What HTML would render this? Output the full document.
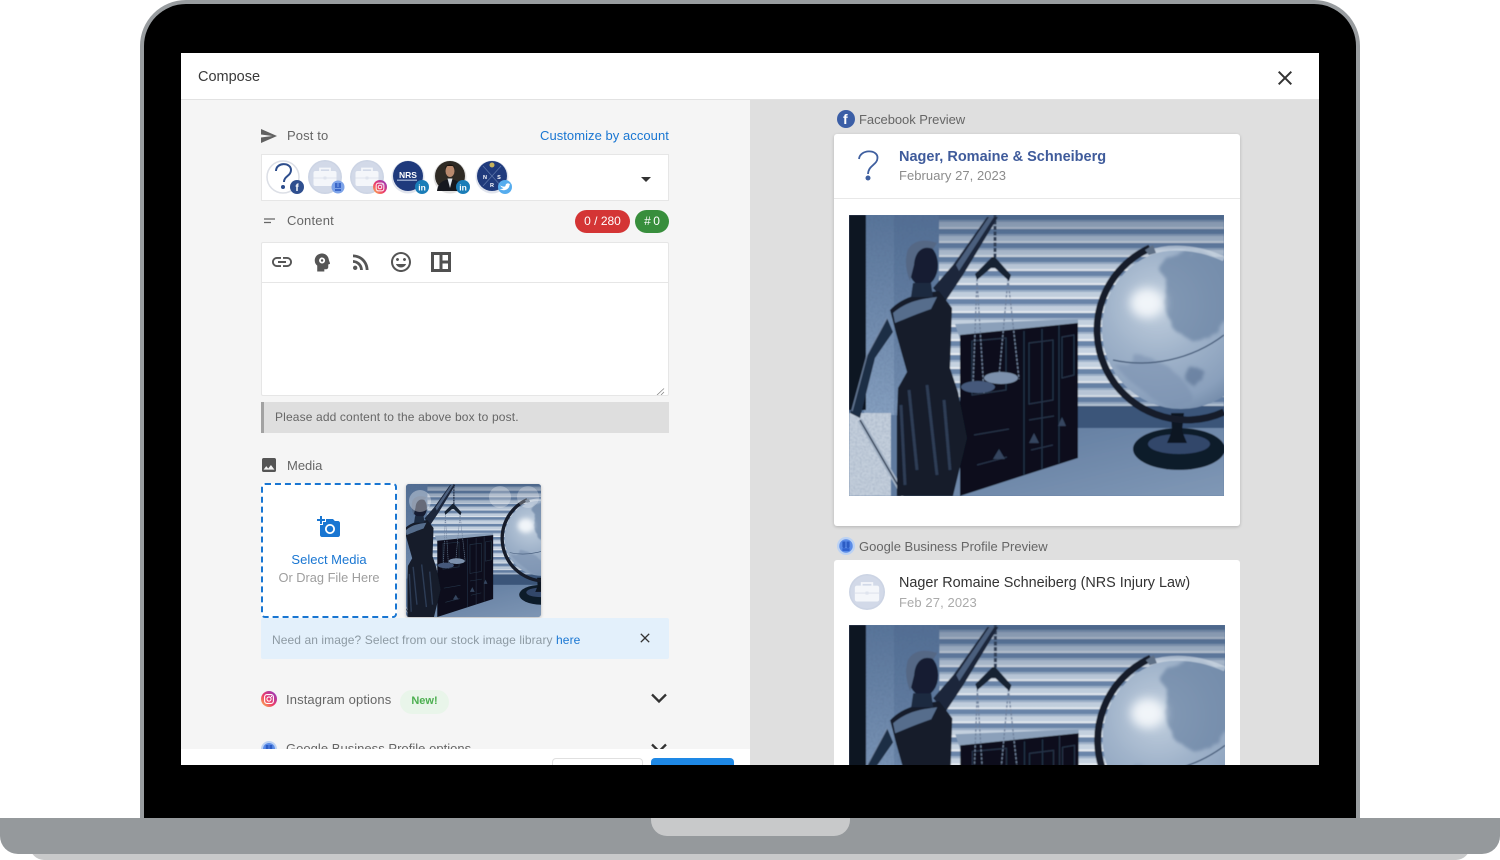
<!DOCTYPE html>
<html lang="en">
<head>
<meta charset="utf-8">
<title>Compose</title>
<style>
html,body{margin:0;padding:0;background:#fff;width:1500px;height:860px;overflow:hidden}
*{box-sizing:border-box}
body{font-family:"Liberation Sans",Arial,sans-serif}
#root{position:absolute;left:0;top:0;width:1500px;height:860px;overflow:hidden;contain:paint}
.a{position:absolute}
.t{position:absolute;white-space:nowrap;line-height:16px}
svg{display:block;overflow:hidden}
.soft{filter:blur(.35px)}
</style>
</head>
<body>
<div id="root">
<svg width="0" height="0" style="position:absolute;left:0;top:0">
<defs>
<filter id="pb" x="-2%" y="-2%" width="104%" height="104%"><feGaussianBlur stdDeviation=".5"/></filter>
<filter id="hb" x="-60%" y="-60%" width="220%" height="220%"><feGaussianBlur stdDeviation="5"/></filter>
<filter id="gr" x="0" y="0" width="100%" height="100%"><feTurbulence type="fractalNoise" baseFrequency=".45" numOctaves="2" seed="4"/><feColorMatrix values="0 0 0 0 .08  0 0 0 0 .13  0 0 0 0 .24  0 0 0 1.300 -.45"/></filter>
<filter id="rg" x="-10%" y="-10%" width="120%" height="120%"><feTurbulence type="fractalNoise" baseFrequency=".05" numOctaves="3" seed="7" result="n"/><feDisplacementMap in="SourceGraphic" in2="n" scale="16"/><feGaussianBlur stdDeviation="1.500"/></filter>
<pattern id="bl" width="14" height="14" patternUnits="userSpaceOnUse">
<rect width="14" height="14" fill="#cfdbe8"/>
<rect y="0" width="14" height="5" fill="#6f8aae"/>
<rect y="5" width="14" height="2" fill="#a5b8cf"/>
<rect y="12" width="14" height="2" fill="#f2f6fa"/>
</pattern>
<linearGradient id="bs" x1="0" x2="0" y1="0" y2="1">
<stop offset="0" stop-color="#2b4468" stop-opacity=".5"/><stop offset=".3" stop-color="#2b4468" stop-opacity=".1"/><stop offset=".75" stop-color="#2b4468" stop-opacity=".05"/><stop offset="1" stop-color="#2b4468" stop-opacity=".2"/>
</linearGradient>
<radialGradient id="gl" cx=".35" cy=".35" r=".8">
<stop offset="0" stop-color="#c2d0df"/><stop offset=".4" stop-color="#a0b3ca"/><stop offset=".75" stop-color="#8aa0bc"/><stop offset="1" stop-color="#637c9c"/>
</radialGradient>
<linearGradient id="dk" x1="0" x2="1" y1="0" y2="1">
<stop offset="0" stop-color="#5f7a9e"/><stop offset="1" stop-color="#8098b6"/>
</linearGradient>
<linearGradient id="wl" x1="0" x2="0" y1="0" y2="1">
<stop offset="0" stop-color="#587499"/><stop offset="1" stop-color="#86a0c0"/>
</linearGradient>
<linearGradient id="ig" x1="0" x2="1" y1="1" y2="0">
<stop offset="0" stop-color="#fdc04f"/><stop offset=".45" stop-color="#ec3a6a"/><stop offset="1" stop-color="#8a3ac8"/>
</linearGradient>
<symbol id="photo" viewBox="0 0 375 281" preserveAspectRatio="xMidYMid slice">
<rect width="375" height="281" fill="#5f7a9e"/>
<g filter="url(#pb)">
<rect x="90" width="285" height="195" fill="url(#bl)"/>
<rect x="90" width="285" height="195" fill="url(#bs)"/>
<rect x="15" width="75" height="200" fill="url(#wl)"/>
<rect x="15" width="75" height="200" filter="url(#gr)" opacity=".35"/>
<rect x="45" width="45" height="200" fill="#3f5a82" opacity=".25"/>
<rect width="17" height="195" fill="#0c1320"/>
<rect x="90" y="191" width="285" height="24" fill="#3a5479"/>
<rect x="90" y="213" width="285" height="68" fill="url(#dk)"/>
<rect y="198" width="42" height="83" fill="#c4cfdc"/>
<rect y="198" width="42" height="83" filter="url(#gr)" opacity=".3"/>
<path d="M106 109L229 104V114L111 124Z" fill="#8ba0ba"/>
<path d="M111 120L229 108V243L111 281Z" fill="#0b111c"/>
<g stroke="#27344a" fill="none" stroke-width="1.200">
<path d="M175 116V260M210 110V248M193 114V254"/>
<path d="M123 126l34-3v52l-34 5zM180 128l24-3v60l-24 4zM213 122l12-2v40l-12 3z"/>
<path d="M125 220l35-6M180 205l25-4M128 250l30-8M182 235l22-5"/>
</g>
<path d="M150 234l-6 10h12zM185 218l-5 10h10zM213 202l-4 9h8z" fill="#34455f"/>
<ellipse cx="330" cy="234" rx="46" ry="21" fill="#111a2a"/>
<ellipse cx="330" cy="229" rx="31" ry="10" fill="#33476a"/>
<path d="M322 198h13l-2 18 5 12h-20l5-12z" fill="#0c1320"/>
<ellipse cx="332" cy="114" rx="79" ry="80" fill="url(#gl)"/>
<g filter="url(#rg)">
<path d="M310 52c18-18 50-16 72-8v58l-22 22c-20 6-38-6-42-24-3-18 0-30-8-48z" fill="#6a82a3" opacity=".7"/>
<path d="M266 150c20 24 42 40 70 42l8-10c-8-18-22-32-46-40z" fill="#7a91af" opacity=".6"/>
<ellipse cx="345" cy="160" rx="11" ry="8" fill="#647c9c" opacity=".8"/>
</g>
<path d="M300 38c20-8 50-6 75 6" fill="none" stroke="#d5dfea" stroke-width="5" opacity=".6"/>
<ellipse cx="298" cy="88" rx="17" ry="15" fill="#f1f5f9" filter="url(#hb)"/>
<path d="M264 145c36 8 78 0 111-25" fill="none" stroke="#3f5675" stroke-width="1.300"/>
<path d="M301 33A87 87 0 0 0 375 197" fill="none" stroke="#121a2a" stroke-width="7"/>
<path d="M296 35l8-5 3 8-7 2z" fill="#5f6f86"/>
<path d="M146 0V46" stroke="#2f3d55" stroke-width="3" stroke-dasharray="4 1.500"/>
<path d="M128 64L124 170M159 64L150 162M128 64L135 178M159 64L170 164" fill="none" stroke="#6f819c" stroke-width="1.300" stroke-dasharray="2.500 1.500"/>
<path d="M128 65l-2-6 17-17 3 0 16 18-2 6-14-13h-4z" fill="#162032"/>
<ellipse cx="129" cy="172" rx="17" ry="6" fill="#45597a"/>
<ellipse cx="152" cy="163" rx="17" ry="6" fill="#7c90ac"/>
<path d="M11 205L55 281" stroke="#a3b2c5" stroke-width="5"/>
<path d="M11 205L55 281" stroke="#2f3e54" stroke-width="1.500"/>
<path d="M84 73L104 50L138 2H149L114 60L96 87Z" fill="#1a263b"/>
<path d="M107 50L140 2h5L110 56Z" fill="#62789a" opacity=".7"/>
<path d="M38 103L18 140L1 198L11 203L26 143L44 117Z" fill="#1f2d45"/>
<path d="M38 103L18 140L3 196" fill="none" stroke="#7e93b0" stroke-width="1.500" opacity=".7"/>
<path d="M41 95C55 80 75 78 90 76L103 93L101 153L109 177L118 223L104 281H48V200L49 173L58 157L47 118Z" fill="#121b2c"/>
<path d="M44 98C58 86 72 84 88 82L82 94C70 98 56 104 46 108Z" fill="#566d8c"/>
<path d="M60 175l8 80M78 170l10 90M95 185l6 70M52 190l4 80" stroke="#34455f" stroke-width="3" fill="none" opacity=".8"/>
<ellipse cx="74" cy="50" rx="15" ry="21" fill="#141e31"/>
<path d="M58 38C60 28 72 22 88 28L84 34C74 30 66 36 65 50L61 66C57 56 56 46 58 38Z" fill="#546885"/>
<path d="M64 68h18l2 14H62Z" fill="#1e2a41"/>
</g>
</symbol>
<symbol id="photoTop" viewBox="0 0 375 140"><use href="#photo" width="375" height="281"/></symbol>
<symbol id="case" viewBox="0 0 34 34">
<circle cx="17" cy="17" r="17" fill="#ccd4e4"/>
<circle cx="17" cy="17" r="15.500" fill="#d2d9e8"/>
<rect x="5.500" y="11" width="23" height="15" rx="2" fill="#f4f6fa"/>
<path d="M12 11V8.500h10V11" fill="none" stroke="#f4f6fa" stroke-width="1.700"/>
<path d="M5.500 18h23" stroke="#dfe4ee"/>
<rect x="15.500" y="16.500" width="3" height="3" rx=".5" fill="#dfe4ee"/>
</symbol>
<symbol id="gbp" viewBox="0 0 20 20">
<circle cx="10" cy="10" r="10" fill="#bcd2f3"/>
<circle cx="10" cy="10" r="7.500" fill="#5b8ce8"/>
<path d="M6 5h3.400v5.600a1.700 1.700 0 0 1-3.400 0zM10.600 5H14v5.600a1.700 1.700 0 0 1-3.400 0z" fill="#2c5cc4"/>
<path d="M6 12.500h8v3H6z" fill="#2f62cf"/>
</symbol>
<symbol id="igic" viewBox="0 0 20 20">
<circle cx="10" cy="10" r="10" fill="url(#ig)"/>
<rect x="4.500" y="4.500" width="11" height="11" rx="3" fill="none" stroke="#fff" stroke-width="1.400"/>
<circle cx="10" cy="10" r="2.600" fill="none" stroke="#fff" stroke-width="1.300"/>
<circle cx="13.200" cy="6.800" r=".8" fill="#fff"/>
</symbol>
</defs>
</svg>

<!-- laptop -->
<div class="a" style="left:140px;top:0;width:1220px;height:830px;background:#000;border:4px solid #989c9f;border-bottom:0;border-radius:46px 46px 0 0"></div>
<div class="a" style="left:30px;top:840px;width:1440px;height:20px;background:#c8c9ca;border-radius:0 0 14px 14px"></div>
<div class="a" style="left:0;top:818px;width:1500px;height:36px;background:#95999c;border-radius:0 0 18px 18px"></div>
<div class="a" style="left:651px;top:818px;width:199px;height:18px;background:#c8c9ca;border-radius:0 0 16px 16px"></div>

<!-- screen -->
<div class="a soft" style="left:181px;top:53px;width:1138px;height:712px;background:#fff;overflow:hidden">
  <div class="a" style="left:0;top:46px;width:569px;height:666px;background:#f5f5f5"></div>
  <div class="a" style="left:569px;top:46px;width:569px;height:666px;background:#dfdfdf"></div>
  <div class="a" style="left:0;top:46px;width:1138px;height:1px;background:#e2e2e2"></div>
  <div class="t" style="left:17px;top:16px;font-size:14.500px;color:#3a3a3a;line-height:17px">Compose</div>
  <svg class="a" style="left:1092px;top:13px" width="24" height="24" viewBox="0 0 24 24"><path fill="#333" d="M19 6.410L17.590 5 12 10.590 6.410 5 5 6.410 10.590 12 5 17.590 6.410 19 12 13.410 17.590 19 19 17.590 13.410 12z"/></svg>
</div>

<!-- left column -->
<div class="a soft" style="left:0;top:0;width:750px;height:765px;overflow:hidden">
  <svg class="a" style="left:261px;top:129px" width="16" height="14" viewBox="2 3 21 18" preserveAspectRatio="none"><path fill="#616161" d="M2.010 21L23 12 2.010 3 2 10l15 2-15 2z"/></svg>
  <div class="t" style="left:287px;top:128px;font-size:13px;color:#666;letter-spacing:.12px">Post to</div>
  <div class="t" style="left:540px;top:128px;font-size:13px;color:#1976d2;letter-spacing:.05px">Customize by account</div>

  <div class="a" style="left:261px;top:154px;width:408px;height:47px;background:#fff;border:1px solid #e6e6e6"></div>
  <svg class="a" style="left:262px;top:155px" width="260" height="45" viewBox="0 0 260 45">
    <circle cx="21" cy="22" r="16" fill="#fff" stroke="#dcdfe6" stroke-width="1.500"/>
    <path d="M14 16c0-9 15-9 15-1 0 6-7 6-7 12" fill="none" stroke="#2d4d8c" stroke-width="2"/>
    <circle cx="21" cy="32" r="2" fill="#2d4d8c"/>
    <circle cx="35" cy="32" r="7" fill="#2f4f8f"/>
    <use href="#case" x="46" y="5" width="34" height="34"/>
    <circle cx="76" cy="32" r="6.500" fill="#7da3e8"/><path d="M73 28h2.500v4h1v-4H79v5h-6z M73 34h6v2h-6z" fill="#3a67c9"/>
    <use href="#case" x="88" y="5" width="34" height="34"/>
    <use href="#igic" x="111" y="25" width="14" height="14"/>
    <circle cx="146" cy="22" r="16.500" fill="#dfe3ec"/>
    <circle cx="146" cy="21" r="15" fill="#1f3a7c"/>
    <rect x="135" y="24.500" width="20" height="1.500" fill="#8ea0c6"/>
    <circle cx="188" cy="22" r="16.500" fill="#e0e0e0"/>
    <circle cx="188" cy="21" r="15" fill="#2e2a24"/>
    <path d="M175 36c1-9 7-11 13-12 6 1 12 3 13 12z" fill="#16181f"/>
    <path d="M185.500 23.500h5L188 33z" fill="#dfe4ea"/>
    <ellipse cx="188" cy="16" rx="4.500" ry="6" fill="#b98a6e"/>
    <path d="M183 14c0-6 10-6 10 0l-1.500-3h-7z" fill="#1a130e"/>
    <circle cx="230" cy="22" r="16.500" fill="#dfe3ec"/>
    <circle cx="230" cy="21" r="15" fill="#1f3a7c"/>
    <path d="M221 11l18 20M239 11l-18 20" stroke="#5a74a8" stroke-width=".8"/>
    <circle cx="230" cy="10" r="2.500" fill="#c7b35c"/>
    <circle cx="160" cy="32" r="7" fill="#1a7db8"/>
    <circle cx="201" cy="32" r="7" fill="#1a7db8"/>
    <circle cx="243" cy="32" r="7" fill="#55acee"/>
    <path d="M239 30c3 2 5 2 6 1 0-3 3-3 4-2l1-.5-1 1.500c0 4-5 7-10 4 2 0 3 0 4-1-2 0-3-2-4-3.500z" fill="#fff" transform="translate(-1.500 0)"/>
    <text x="35" y="36" font-family="Liberation Sans" font-weight="700" font-size="10" fill="#fff" text-anchor="middle">f</text>
    <text x="146" y="23" font-family="Liberation Sans" font-weight="700" font-size="8.500" fill="#fff" text-anchor="middle">NRS</text>
    <text x="160" y="35.500" font-family="Liberation Sans" font-weight="700" font-size="8.500" fill="#fff" text-anchor="middle">in</text>
    <text x="201" y="35.500" font-family="Liberation Sans" font-weight="700" font-size="8.500" fill="#fff" text-anchor="middle">in</text>
    <text x="223" y="24" font-family="Liberation Sans" font-weight="700" font-size="5.500" fill="#fff" text-anchor="middle">N</text>
    <text x="237" y="24" font-family="Liberation Sans" font-weight="700" font-size="5.500" fill="#fff" text-anchor="middle">S</text>
    <text x="230" y="32" font-family="Liberation Sans" font-weight="700" font-size="5.500" fill="#fff" text-anchor="middle">R</text>
  </svg>
  <div class="a" style="left:641px;top:177px;width:0;height:0;border-left:5px solid transparent;border-right:5px solid transparent;border-top:5px solid #333"></div>

  <svg class="a" style="left:263px;top:217px" width="13" height="8" viewBox="0 0 13 8"><path d="M1 2h11M1 5.500h7" stroke="#666" stroke-width="1.300"/></svg>
  <div class="t" style="left:287px;top:213px;font-size:13px;color:#666;letter-spacing:.2px">Content</div>
  <div class="t" style="left:575px;top:210px;width:55px;height:23px;line-height:22px;border-radius:12px;background:#d32f2f;color:#fff;font-size:12px;text-align:center;opacity:.97">0 / 280</div>
  <div class="t" style="left:635px;top:210px;width:34px;height:23px;line-height:22px;border-radius:12px;background:#388e3c;color:#fff;font-size:12px;text-align:center">#&#8201;0</div>

  <div class="a" style="left:261px;top:242px;width:408px;height:154px;background:#fff;border:1px solid #e6e6e6;border-radius:2px"></div>
  <div class="a" style="left:262px;top:282px;width:406px;height:1px;background:#e6e6e6"></div>
  <svg class="a" style="left:270px;top:250px" width="24" height="24" viewBox="0 0 24 24"><path fill="#555" d="M3.900 12c0-1.710 1.390-3.100 3.100-3.100h4V7H7c-2.760 0-5 2.240-5 5s2.240 5 5 5h4v-1.900H7c-1.710 0-3.100-1.390-3.100-3.100zM8 13h8v-2H8v2zm9-6h-4v1.900h4c1.710 0 3.100 1.390 3.100 3.100s-1.390 3.100-3.100 3.100h-4V17h4c2.760 0 5-2.240 5-5s-2.240-5-5-5z"/></svg>
  <svg class="a" style="left:308px;top:249px" width="27" height="27" viewBox="0 0 24 24"><path fill="#555" fill-rule="evenodd" d="M12.500 4C8.700 4 6 6.700 6 10.200c0 2 .9 3.500 2.200 4.600V20h6.300v-2h1.700c1 0 1.800-.8 1.800-1.800v-2.400l1.200-.5c.4-.2.500-.6.300-.9L18.600 10C18.300 6.500 15.800 4 12.500 4zm0 3.500a2.700 2.700 0 1 1 0 5.400 2.700 2.700 0 0 1 0-5.400zm0 1.600a1.100 1.100 0 1 0 0 2.200 1.100 1.100 0 0 0 0-2.200z"/></svg>
  <svg class="a" style="left:349px;top:250px" width="24" height="24" viewBox="0 0 24 24"><circle cx="6.180" cy="17.820" r="2.180" fill="#555"/><path fill="#555" d="M4 4.440v2.830c7.030 0 12.730 5.700 12.730 12.730h2.830c0-8.590-6.970-15.560-15.560-15.560zm0 5.660v2.830c3.900 0 7.070 3.170 7.070 7.070h2.830c0-5.470-4.430-9.900-9.900-9.900z"/></svg>
  <svg class="a" style="left:389px;top:250px" width="24" height="24" viewBox="0 0 24 24"><path fill="#555" d="M11.990 2C6.470 2 2 6.480 2 12s4.470 10 9.990 10C17.520 22 22 17.520 22 12S17.520 2 11.990 2zM12 20c-4.420 0-8-3.580-8-8s3.580-8 8-8 8 3.580 8 8-3.580 8-8 8zm3.500-9c.830 0 1.500-.670 1.500-1.500S16.330 8 15.500 8 14 8.670 14 9.500s.670 1.500 1.500 1.500zm-7 0c.830 0 1.500-.670 1.500-1.500S9.330 8 8.500 8 7 8.670 7 9.500 7.670 11 8.500 11zm3.500 6.500c2.330 0 4.310-1.460 5.110-3.500H6.890c.800 2.040 2.780 3.500 5.110 3.500z"/></svg>
  <svg class="a" style="left:431px;top:252px" width="20" height="20" viewBox="0 0 20 20"><rect width="20" height="20" fill="#505050"/><rect x="3" y="3" width="5.500" height="14" fill="#fff"/><rect x="11.500" y="3" width="5.500" height="5.500" fill="#fff"/><rect x="11.500" y="11.500" width="5.500" height="5.500" fill="#fff"/></svg>
  <svg class="a" style="left:656px;top:388px" width="9" height="7" viewBox="0 0 9 7"><path d="M1 7L8 .5M5 7l3-3" stroke="#888" stroke-width=".8"/></svg>

  <div class="a" style="left:261px;top:402px;width:408px;height:31px;background:#dedede;border-left:3px solid #a2a2a2"></div>
  <div class="t" style="left:275px;top:409px;font-size:12px;color:#666;letter-spacing:.14px">Please add content to the above box to post.</div>

  <svg class="a" style="left:262px;top:458px" width="14" height="14" viewBox="3 3 18 18"><path fill="#555" d="M21 19V5c0-1.100-.900-2-2-2H5c-1.100 0-2 .900-2 2v14c0 1.100.900 2 2 2h14c1.100 0 2-.900 2-2zM8.500 13.500l2.500 3.010L14.500 12l4.500 6H5l3.500-4.500z"/></svg>
  <div class="t" style="left:287px;top:458px;font-size:13px;color:#666">Media</div>

  <div class="a" style="left:261px;top:483px;width:136px;height:135px;background:#fff;border:2px dashed #1976d2;border-radius:4px"></div>
  <svg class="a" style="left:317px;top:515px" width="24" height="24" viewBox="0 0 24 24"><path fill="#1976d2" d="M3 4V1h2v3h3v2H5v3H3V6H0V4h3zm3 6V7h3V4h7l1.830 2H21c1.100 0 2 .900 2 2v12c0 1.100-.900 2-2 2H5c-1.100 0-2-.900-2-2V10h3zm7 9c2.760 0 5-2.240 5-5s-2.240-5-5-5-5 2.240-5 5 2.240 5 5 5zm-3.200-5c0 1.770 1.430 3.200 3.200 3.200s3.200-1.430 3.200-3.200-1.430-3.200-3.200-3.200-3.200 1.430-3.200 3.200z"/></svg>
  <div class="t" style="left:261px;width:136px;top:552px;font-size:13px;color:#1976d2;text-align:center">Select Media</div>
  <div class="t" style="left:261px;width:136px;top:570px;font-size:12.800px;color:#9e9e9e;text-align:center">Or Drag File Here</div>

  <div class="a" style="left:406px;top:484px;width:135px;height:133px;border-radius:3px;overflow:hidden;box-shadow:0 1px 3px rgba(0,0,0,.25)">
    <svg width="135" height="133" viewBox="0 0 135 133"><use href="#photo" x="0" y="0" width="135" height="133"/>
      <circle cx="14" cy="17" r="11" fill="#fff" opacity=".35"/><circle cx="94" cy="13" r="11" fill="#fff" opacity=".28"/><circle cx="122" cy="13" r="11" fill="#fff" opacity=".25"/>
    </svg>
  </div>

  <div class="a" style="left:261px;top:618px;width:408px;height:41px;background:#e3f0fb;border-radius:2px"></div>
  <div class="t" style="left:272px;top:632px;font-size:12px;color:#8d9aa3;letter-spacing:.09px">Need an image? Select from our stock image library <span style="color:#1976d2">here</span></div>
  <svg class="a" style="left:637px;top:630px" width="16" height="16" viewBox="0 0 24 24"><path fill="#333" d="M19 6.410L17.590 5 12 10.590 6.410 5 5 6.410 10.590 12 5 17.590 6.410 19 12 13.410 17.590 19 19 17.590 13.410 12z"/></svg>

  <svg class="a" style="left:261px;top:691px" width="16" height="16"><use href="#igic" width="16" height="16"/></svg>
  <div class="t" style="left:286px;top:692px;font-size:13px;color:#666;letter-spacing:.12px">Instagram options</div>
  <div class="t" style="left:400px;top:690px;width:49px;height:24px;line-height:23px;border-radius:12px;background:#e9f5ea;color:#4caf50;font-size:11px;font-weight:700;text-align:center">New!</div>
  <svg class="a" style="left:650px;top:692px" width="18" height="12" viewBox="0 0 18 12"><path d="M2 2.500l7 7 7-7" fill="none" stroke="#333" stroke-width="2.300"/></svg>

  <svg class="a" style="left:261px;top:741px" width="16" height="16"><use href="#gbp" width="16" height="16"/></svg>
  <div class="t" style="left:286px;top:741px;font-size:13px;color:#666;letter-spacing:.03px">Google Business Profile options</div>
  <svg class="a" style="left:650px;top:742px" width="18" height="12" viewBox="0 0 18 12"><path d="M2 2.500l7 7 7-7" fill="none" stroke="#333" stroke-width="2.300"/></svg>

  <div class="a" style="left:181px;top:749px;width:569px;height:16px;background:#fff"></div>
  <div class="a" style="left:552px;top:758px;width:91px;height:7px;background:#fff;border:1px solid #e0e0e0;border-bottom:0;border-radius:4px 4px 0 0"></div>
  <div class="a" style="left:651px;top:758px;width:83px;height:7px;background:#1e88e5;border-radius:4px 4px 0 0"></div>
</div>

<!-- right column -->
<div class="a soft" style="left:750px;top:100px;width:569px;height:665px;overflow:hidden">
  <svg class="a" style="left:87px;top:10px" width="18" height="18" viewBox="0 0 18 18"><circle cx="9" cy="9" r="9" fill="#3b5ea6"/></svg>
  <div class="t" style="left:93px;top:9px;font-size:14px;font-weight:700;color:#fff;line-height:20px">f</div>
  <div class="t" style="left:109px;top:12px;font-size:13px;color:#666;letter-spacing:-.05px">Facebook Preview</div>

  <div class="a" style="left:84px;top:34px;width:406px;height:392px;background:#fff;border-radius:3px;box-shadow:0 1px 3px rgba(0,0,0,.2)"></div>
  <div class="a" style="left:84px;top:98px;width:406px;height:1px;background:#e8e8e8"></div>
  <svg class="a" style="left:104px;top:48px" width="28" height="36" viewBox="0 0 28 36"><path d="M5 11C6 1 24 1 23.500 10c-.300 7-9 7-9.500 16" fill="none" stroke="#3f5f9f" stroke-width="1.800"/><circle cx="14" cy="30" r="2.500" fill="#3f5f9f"/></svg>
  <div class="t" style="left:149px;top:49px;font-size:14.500px;font-weight:700;color:#3f5b9b">Nager, Romaine &amp; Schneiberg</div>
  <div class="t" style="left:149px;top:68px;font-size:13px;color:#8c8c8c;letter-spacing:.05px">February 27, 2023</div>
  <svg class="a" style="left:99px;top:115px" width="375" height="281" viewBox="0 0 375 281"><use href="#photo" width="375" height="281"/></svg>

  <svg class="a" style="left:87px;top:437px" width="18" height="18"><use href="#gbp" width="18" height="18"/></svg>
  <div class="t" style="left:109px;top:439px;font-size:13px;color:#666">Google Business Profile Preview</div>

  <div class="a" style="left:84px;top:460px;width:406px;height:205px;background:#fff;border-radius:3px 3px 0 0"></div>
  <svg class="a" style="left:99px;top:474px" width="36" height="36"><use href="#case" width="36" height="36"/></svg>
  <div class="t" style="left:149px;top:475px;font-size:14.400px;color:#333">Nager Romaine Schneiberg (NRS Injury Law)</div>
  <div class="t" style="left:149px;top:495px;font-size:13px;color:#aaa;letter-spacing:.1px">Feb 27, 2023</div>
  <svg class="a" style="left:99px;top:525px" width="376" height="140" viewBox="0 0 375 139.600"><use href="#photoTop" width="375" height="140"/></svg>
</div>
</div>
</body>
</html>
